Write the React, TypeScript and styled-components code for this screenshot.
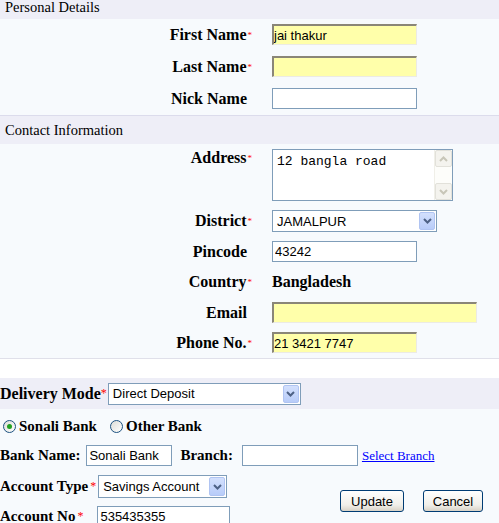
import React from "react";
import styled, { createGlobalStyle } from "styled-components";

const Global = createGlobalStyle`
  html, body { margin: 0; padding: 0; background: #fff; }
  body { font-family: "Liberation Serif", "Times New Roman", serif; color: #000; overflow: hidden; }
`;

const Page = styled.div`
  width: 499px;
  height: 523px;
  overflow: hidden;
  display: flex;
  flex-direction: column;
`;

const SectionHeader = styled.div<{ $h: number; $line?: boolean }>`
  height: ${(p) => p.$h}px;
  flex-shrink: 0;
  box-sizing: border-box;
  display: flex;
  align-items: ${(p) => (p.$line ? "center" : "flex-start")};
  padding-left: 5px;
  background: #eeeef7;
  border-top: ${(p) => (p.$line ? "1px solid #dcdcec" : "none")};
  font-size: 14.5px;
  line-height: 15px;
`;

const FormGrid = styled.div<{ $gap: number; $pb?: number }>`
  display: grid;
  grid-template-columns: 252px auto;
  column-gap: 20px;
  row-gap: ${(p) => p.$gap}px;
  padding: 5px 0 ${(p) => p.$pb ?? 5}px;
  background: #f7fafd;
  align-items: center;
`;

const Label = styled.div<{ $top?: boolean }>`
  text-align: right;
  font-weight: bold;
  font-size: 16px;
  line-height: 18px;
  padding-right: 5px;
  white-space: nowrap;
  align-self: ${(p) => (p.$top ? "start" : "center")};
`;

const Req = styled.span`
  color: #ff0000;
  font-size: 9px;
  font-weight: normal;
  vertical-align: 2px;
  margin-right: -5px;
  padding-left: 1px;
`;

const Field = styled.div`
  justify-self: start;
  display: flex;
  align-items: center;
`;

const TextInput = styled.input<{ $w: number; $hl?: boolean }>`
  box-sizing: border-box;
  width: ${(p) => p.$w}px;
  height: 21px;
  margin: 0;
  padding: ${(p) => (p.$hl ? "0 1px 0 0" : "0 2px")};
  font-family: "Liberation Sans", Arial, sans-serif;
  font-size: 13px;
  color: #000;
  outline: none;
  background: ${(p) => (p.$hl ? "#ffffaa" : "#fff")};
  border: ${(p) => (p.$hl ? "none" : "1px solid #7f9db9")};
  ${(p) =>
    p.$hl
      ? `border-top: 2px solid #8a8678; border-left: 2px solid #8a8678; border-right: 1px solid #ecebe4; border-bottom: 1px solid #ecebe4;`
      : ""}
`;

const AreaBox = styled.div`
  box-sizing: border-box;
  width: 181px;
  height: 52px;
  border: 1px solid #7f9db9;
  background: #fff;
  display: flex;
`;

const Area = styled.textarea`
  flex: 1;
  border: none;
  outline: none;
  resize: none;
  overflow: hidden;
  margin: 0;
  padding: 4px 3px 0 4px;
  font-family: "Liberation Mono", "Courier New", monospace;
  font-size: 13px;
  line-height: 15px;
  color: #000;
  background: #fff;
`;

const ScrollBar = styled.div`
  width: 17px;
  display: flex;
  flex-direction: column;
  justify-content: space-between;
  background: #fdfdfa;
  border-left: 1px solid #f0efe8;
`;

const ScrollBtn = styled.div`
  box-sizing: border-box;
  width: 17px;
  height: 17px;
  background: #f4f3ee;
  border: 1px solid #e2e1da;
  border-radius: 2px;
  display: flex;
  align-items: center;
  justify-content: center;
`;

const SelectBox = styled.div<{ $w: number; $h: number }>`
  box-sizing: border-box;
  width: ${(p) => p.$w}px;
  height: ${(p) => p.$h}px;
  border: 1px solid #7f9db9;
  background: #fff;
  display: flex;
  align-items: center;
  padding: 1px;
  font-family: "Liberation Sans", Arial, sans-serif;
  font-size: 13px;
`;

const SelectText = styled.span`
  flex: 1;
  padding-left: 3px;
  white-space: nowrap;
  overflow: hidden;
`;

const DropBtn = styled.span`
  box-sizing: border-box;
  width: 16px;
  align-self: stretch;
  background: linear-gradient(#d3e0fd, #b8ccf9);
  border: 1px solid #b0c4f2;
  border-radius: 2px;
  display: flex;
  align-items: center;
  justify-content: center;
`;

const Value = styled.div`
  font-weight: bold;
  font-size: 16px;
  line-height: 22px;
`;

const Spacer = styled.div`
  height: 20px;
  flex-shrink: 0;
  box-sizing: border-box;
  border-top: 1px solid #e0e0ea;
  background: #fff;
`;

const DeliveryBar = styled.div`
  height: 31px;
  flex-shrink: 0;
  background: #eeeef7;
  display: flex;
  align-items: center;
`;

const InlineLabel = styled.span<{ $mr?: number; $big?: boolean }>`
  font-weight: bold;
  font-size: ${(p) => (p.$big ? 16 : 15)}px;
  white-space: nowrap;
  margin-right: ${(p) => p.$mr ?? 0}px;
`;

const InlineReq = styled.span<{ $ml?: number; $mr?: number }>`
  color: #ff0000;
  font-size: 12px;
  margin-left: ${(p) => p.$ml ?? 2}px;
  margin-right: ${(p) => p.$mr ?? 0}px;
  align-self: center;
`;

const Bottom = styled.div`
  flex: 1;
  background: #f7fafd;
  padding-top: 6px;
  display: flex;
  flex-direction: column;
`;

const Row = styled.div<{ $h: number; $mt?: number }>`
  height: ${(p) => p.$h}px;
  flex-shrink: 0;
  margin-top: ${(p) => p.$mt ?? 0}px;
  display: flex;
  align-items: center;
`;

const RadioLabel = styled.label<{ $mr?: number }>`
  display: flex;
  align-items: center;
  font-weight: bold;
  font-size: 15px;
  margin-right: ${(p) => p.$mr ?? 0}px;
`;

const Radio = styled.span<{ $on?: boolean }>`
  box-sizing: border-box;
  width: 13px;
  height: 13px;
  border-radius: 50%;
  border: 1px solid #1c5180;
  background: linear-gradient(135deg, #dcdcd7, #fff);
  margin: 0 3px 0 3px;
  display: flex;
  align-items: center;
  justify-content: center;
  &::after {
    content: "";
    width: 5px;
    height: 5px;
    border-radius: 50%;
    background: ${(p) => (p.$on ? "#21a121" : "transparent")};
  }
`;

const Gap = styled.span<{ $w: number }>`
  display: inline-block;
  width: ${(p) => p.$w}px;
`;

const Link = styled.a`
  color: #0000ff;
  text-decoration: underline;
  font-size: 13px;
  margin-left: 4px;
  cursor: pointer;
`;

const AccountArea = styled.div`
  display: flex;
  margin-top: 9px;
`;

const LeftCol = styled.div`
  width: 230px;
  display: flex;
  flex-direction: column;
`;

const Buttons = styled.div`
  margin-left: 110px;
  margin-top: 15px;
  display: flex;
  gap: 19px;
  align-items: flex-start;
`;

const XPButton = styled.button<{ $w: number }>`
  box-sizing: border-box;
  width: ${(p) => p.$w}px;
  height: 22px;
  padding: 0;
  border: 1px solid #003c74;
  border-radius: 3px;
  background: linear-gradient(#ffffff, #f0efea 70%, #d8d2c6);
  font-family: "Liberation Sans", Arial, sans-serif;
  font-size: 13px;
  color: #000;
`;

const Chevron = ({ color, up }: { color: string; up?: boolean }) => (
  <svg width="9" height="6" viewBox="0 0 9 6">
    <path
      d={up ? "M1 5 L4.5 1.5 L8 5" : "M1 1 L4.5 4.5 L8 1"}
      fill="none"
      stroke={color}
      strokeWidth="2"
    />
  </svg>
);

const Select = ({ w, h, text }: { w: number; h: number; text: string }) => (
  <SelectBox $w={w} $h={h}>
    <SelectText>{text}</SelectText>
    <DropBtn>
      <Chevron color="#4d6185" />
    </DropBtn>
  </SelectBox>
);

export default function App() {
  return (
    <Page>
      <Global />
      <SectionHeader $h={19}>Personal Details</SectionHeader>
      <FormGrid $gap={11} $pb={6}>
        <Label>
          First Name<Req>*</Req>
        </Label>
        <Field>
          <TextInput $w={145} $hl defaultValue="jai thakur" />
        </Field>
        <Label>
          Last Name<Req>*</Req>
        </Label>
        <Field>
          <TextInput $w={145} $hl defaultValue="" />
        </Field>
        <Label>Nick Name</Label>
        <Field>
          <TextInput $w={145} defaultValue="" />
        </Field>
      </FormGrid>
      <SectionHeader $h={29} $line>
        Contact Information
      </SectionHeader>
      <FormGrid $gap={9}>
        <Label $top>
          Address<Req>*</Req>
        </Label>
        <Field>
          <AreaBox>
            <Area defaultValue="12 bangla road" />
            <ScrollBar>
              <ScrollBtn>
                <Chevron color="#c8c6b8" up />
              </ScrollBtn>
              <ScrollBtn>
                <Chevron color="#c8c6b8" />
              </ScrollBtn>
            </ScrollBar>
          </AreaBox>
        </Field>
        <Label>
          District<Req>*</Req>
        </Label>
        <Field>
          <Select w={165} h={22} text="JAMALPUR" />
        </Field>
        <Label>Pincode</Label>
        <Field>
          <TextInput $w={145} defaultValue="43242" />
        </Field>
        <Label>
          Country<Req>*</Req>
        </Label>
        <Field>
          <Value>Bangladesh</Value>
        </Field>
        <Label>Email</Label>
        <Field>
          <TextInput $w={205} $hl defaultValue="" />
        </Field>
        <Label>
          Phone No.<Req>*</Req>
        </Label>
        <Field>
          <TextInput $w={145} $hl defaultValue="21 3421 7747" />
        </Field>
      </FormGrid>
      <Spacer />
      <DeliveryBar>
        <InlineLabel $big>Delivery Mode</InlineLabel>
        <InlineReq $ml={0} $mr={1}>*</InlineReq>
        <Select w={193} h={22} text="Direct Deposit" />
      </DeliveryBar>
      <Bottom>
        <Row $h={22}>
          <RadioLabel $mr={10}>
            <Radio $on />
            Sonali Bank
          </RadioLabel>
          <RadioLabel>
            <Radio />
            Other Bank
          </RadioLabel>
        </Row>
        <Row $h={21} $mt={8}>
          <InlineLabel $mr={6}>Bank Name:</InlineLabel>
          <TextInput $w={86} defaultValue="Sonali Bank" />
          <Gap $w={8} />
          <InlineLabel $mr={9}>Branch:</InlineLabel>
          <TextInput $w={116} defaultValue="" />
          <Link>Select Branch</Link>
        </Row>
        <AccountArea>
          <LeftCol>
            <Row $h={23}>
              <InlineLabel>Account Type</InlineLabel>
              <InlineReq $mr={2}>*</InlineReq>
              <Select w={129} h={23} text="Savings Account" />
            </Row>
            <Row $h={21} $mt={8}>
              <InlineLabel>Account No</InlineLabel>
              <InlineReq $mr={14}>*</InlineReq>
              <TextInput $w={133} defaultValue="535435355" />
            </Row>
          </LeftCol>
          <Buttons>
            <XPButton $w={64}>Update</XPButton>
            <XPButton $w={60}>Cancel</XPButton>
          </Buttons>
        </AccountArea>
      </Bottom>
    </Page>
  );
}
